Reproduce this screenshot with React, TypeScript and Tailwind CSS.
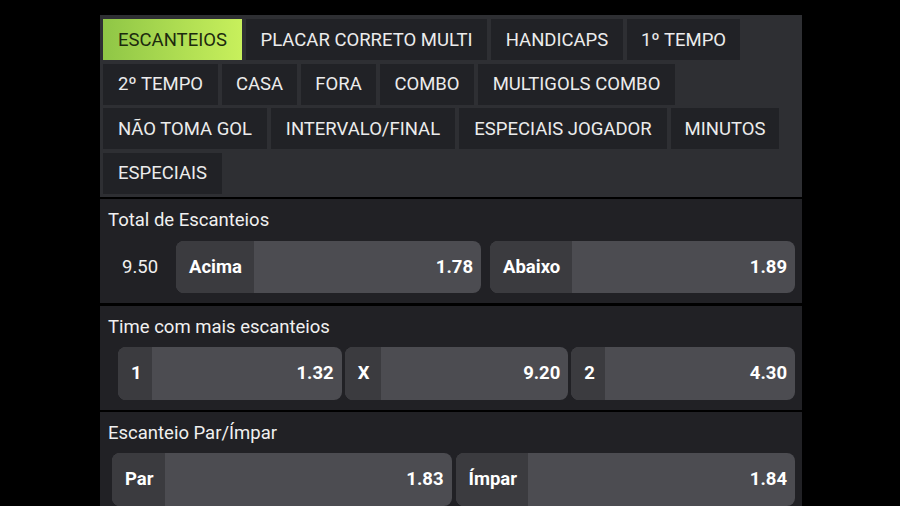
import React from "react";

const tabs: { label: string; w: number }[][] = [
  [
    { label: "ESCANTEIOS", w: 139 },
    { label: "PLACAR CORRETO MULTI", w: 241 },
    { label: "HANDICAPS", w: 132 },
    { label: "1º TEMPO", w: 113 },
  ],
  [
    { label: "2º TEMPO", w: 115 },
    { label: "CASA", w: 75 },
    { label: "FORA", w: 75 },
    { label: "COMBO", w: 94 },
    { label: "MULTIGOLS COMBO", w: 197 },
  ],
  [
    { label: "NÃO TOMA GOL", w: 164 },
    { label: "INTERVALO/FINAL", w: 184 },
    { label: "ESPECIAIS JOGADOR", w: 208 },
    { label: "MINUTOS", w: 108 },
  ],
  [{ label: "ESPECIAIS", w: 119 }],
];

function Odd({ label, value, labelW }: { label: string; value: string; labelW: number }) {
  return (
    <div className="flex flex-1 h-full rounded-lg overflow-hidden bg-[#4c4c51]">
      <div
        className="flex items-center pl-[13px] pt-[1px] bg-[#3b3b3f] font-bold text-white"
        style={{ width: labelW }}
      >
        {label}
      </div>
      <div className="flex flex-1 items-center justify-end pr-[8px] pt-[1px] font-bold text-white">
        {value}
      </div>
    </div>
  );
}

export default function App() {
  return (
    <div
      className="w-[900px] h-[506px] bg-black overflow-hidden text-[18.5px] text-[#ececec]"
      style={{ fontFamily: "Roboto, 'Liberation Sans', sans-serif" }}
    >
      <div className="ml-[100px] w-[702px] pt-[15px] flex flex-col gap-[2px]">
        <div className="bg-[#2e2f33] pl-[3px] pt-[4px] pb-[3.5px] flex flex-col gap-[3.5px]">
          {tabs.map((row, i) => (
            <div key={i} className="flex gap-[4px]">
              {row.map((t) => (
                <div
                  key={t.label}
                  className={
                    t.label === "ESCANTEIOS"
                      ? "h-[41px] pt-[2px] flex items-center justify-center bg-linear-to-r from-[#8fc646] to-[#c8f05c] text-[#1c2a0e]"
                      : "h-[41px] pt-[2px] flex items-center justify-center bg-[#212226] text-[#ececec]"
                  }
                  style={{ width: t.w }}
                >
                  {t.label}
                </div>
              ))}
            </div>
          ))}
        </div>

        <div className="bg-[#212125] pt-[9px] pb-[10px] pr-[7px]">
          <div className="pl-[8px] h-[24px] leading-[24px] text-[#f0f0f0]">Total de Escanteios</div>
          <div className="mt-[9px] h-[52px] flex items-center">
            <div className="w-[76px] pl-[22px] pt-[1px] text-[#f0f0f0]">9.50</div>
            <div className="flex flex-1 gap-[9px] h-full">
              <Odd label="Acima" value="1.78" labelW={78} />
              <Odd label="Abaixo" value="1.89" labelW={82} />
            </div>
          </div>
        </div>

        <div className="mt-[1px] bg-[#212125] pt-[9px] pb-[10px] pr-[7px]">
          <div className="pl-[8px] h-[24px] leading-[24px] text-[#f0f0f0]">Time com mais escanteios</div>
          <div className="mt-[8px] h-[53px] flex gap-[3px] pl-[18px]">
            <Odd label="1" value="1.32" labelW={34} />
            <Odd label="X" value="9.20" labelW={36} />
            <Odd label="2" value="4.30" labelW={34} />
          </div>
        </div>

        <div className="bg-[#212125] pt-[9px] pb-[10px] pr-[7px] h-[120px]">
          <div className="pl-[8px] h-[24px] leading-[24px] text-[#f0f0f0]">Escanteio Par/Ímpar</div>
          <div className="mt-[8px] h-[53px] flex gap-[4px] pl-[12px]">
            <Odd label="Par" value="1.83" labelW={53} />
            <Odd label="Ímpar" value="1.84" labelW={72} />
          </div>
        </div>
      </div>
    </div>
  );
}
